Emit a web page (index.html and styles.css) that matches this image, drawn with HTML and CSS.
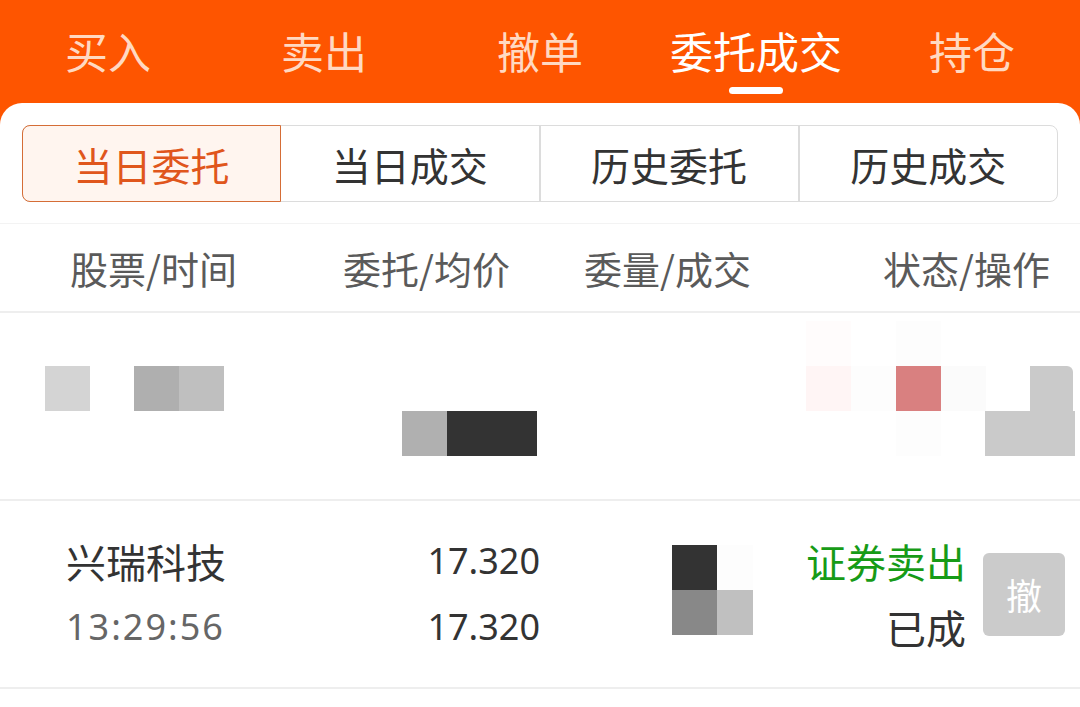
FILE: index.html
```html
<!DOCTYPE html>
<html lang="zh-CN">
<head>
  <meta charset="UTF-8" />
  <meta name="viewport" content="width=device-width, initial-scale=1.0"/>
  <title>委托成交</title>
  <link rel="stylesheet" href="styles.css">
</head>
<body>
  <!-- top trade tabs -->
  <div class="topbar">
    <div class="top-tab">买入</div>
    <div class="top-tab">卖出</div>
    <div class="top-tab">撤单</div>
    <div class="top-tab active">委托成交</div>
    <div class="top-tab">持仓</div>
  </div>

  <div class="panel">
    <div class="segments">
      <div class="seg active">当日委托</div>
      <div class="seg">当日成交</div>
      <div class="seg">历史委托</div>
      <div class="seg">历史成交</div>
    </div>

    <div class="list-head">
      <div class="col c1">股票/时间</div>
      <div class="col c2">委托/均价</div>
      <div class="col c3">委量/成交</div>
      <div class="col c4">状态/操作</div>
    </div>

    <!-- censored row (mosaic) -->
    <div class="row masked">
      <span class="px" style="left:45px;top:53px;background:#d4d4d4"></span>
      <span class="px" style="left:134px;top:53px;background:#afafaf"></span>
      <span class="px" style="left:179px;top:53px;background:#bfbfbf"></span>
      <span class="px" style="left:402px;top:98px;background:#b0b0b0"></span>
      <span class="px wide" style="left:447px;top:98px;background:#333"></span>
      <span class="px" style="left:806px;top:8px;background:#fffcfc"></span>
      <span class="px" style="left:896px;top:8px;background:#fdfdfd"></span>
      <span class="px" style="left:806px;top:53px;background:#fff5f5"></span>
      <span class="px" style="left:851px;top:53px;background:#fdfdfd"></span>
      <span class="px" style="left:896px;top:53px;background:#d98080"></span>
      <span class="px" style="left:941px;top:53px;background:#fbfbfb"></span>
      <span class="px" style="left:896px;top:98px;background:#fdfdfd"></span>
      <span class="px btn-bit" style="left:1030px;top:53px;background:#cacaca"></span>
      <span class="px wide" style="left:985px;top:98px;background:#cacaca"></span>
    </div>

    <div class="row">
      <div class="col c1">
        <div class="name">兴瑞科技</div>
        <div class="time">13:29:56</div>
      </div>
      <div class="col c2">
        <div class="num">17.320</div>
        <div class="num">17.320</div>
      </div>
      <div class="col c3">
        <div class="mosaic">
          <span style="background:#333"></span>
          <span style="background:#fdfdfd"></span>
          <span style="background:#888"></span>
          <span style="background:#c0c0c0"></span>
        </div>
      </div>
      <div class="col c4">
        <div class="status">
          <div class="sell">证券卖出</div>
          <div class="done">已成</div>
        </div>
        <div class="cancel">撤</div>
      </div>
    </div>
  </div>
</body>
</html>
```

FILE: styles.css
```css
* {
  box-sizing: border-box;
  margin: 0;
  padding: 0;
}

body {
  background: #fe5500;
  font-family: "Noto Sans CJK SC", "Noto Sans", sans-serif;
  width: 1080px;
  height: 707px;
  overflow: hidden;
}

.topbar {
  display: grid;
  grid-template-columns: repeat(5, 1fr);
  height: 103px;
}

.top-tab {
  position: relative;
  text-align: center;
  font-size: 43px;
  line-height: 100px;
  color: #ffd9c2;
}

.top-tab.active {
  color: #fff;
}

.top-tab.active::after {
  content: "";
  position: absolute;
  left: 50%;
  bottom: 9px;
  width: 54px;
  height: 7px;
  margin-left: -27px;
  border-radius: 4px;
  background: #fff;
}

.panel {
  background: #fff;
  border-radius: 22px 22px 0 0;
  height: 604px;
  padding-top: 22px;
}

.segments {
  display: flex;
  margin: 0 22px;
  height: 77px;
  border: 1px solid #dcdcdc;
  border-radius: 8px;
}

.seg {
  flex: 1;
  display: flex;
  justify-content: center;
  align-items: center;
  font-size: 39px;
  color: #333;
  border-left: 2px solid #dcdcdc;
}

.seg:first-child {
  border-left: none;
}

.seg.active {
  margin: -1px 0 -1px -1px;
  color: #e0561c;
  background: #fff5ef;
  border: 1px solid #d56d36;
  border-radius: 8px 0 0 8px;
}

.seg.active + .seg {
  border-left: none;
}

.list-head {
  display: grid;
  grid-template-columns: repeat(4, minmax(0, 1fr));
  margin-top: 21px;
  height: 90px;
  align-items: center;
  font-size: 38px;
  color: #5a5a5a;
  border-top: 1px solid #f3f3f3;
  border-bottom: 2px solid #eee;
}

.list-head .c1 { padding-left: 70px; }
.list-head .c2 { text-align: right; padding-right: 30px; }
.list-head .c3 { padding-left: 44px; }
.list-head .c4 { text-align: right; padding-right: 30px; }

.row {
  display: grid;
  grid-template-columns: repeat(4, minmax(0, 1fr));
  height: 188px;
  border-bottom: 2px solid #eee;
  align-items: center;
}

.row.masked {
  position: relative;
  display: block;
}

.px {
  position: absolute;
  width: 45px;
  height: 45px;
}

.px.wide {
  width: 90px;
}

.px.btn-bit {
  width: 43px;
  border-radius: 0 6px 0 0;
}

.row .c1 {
  padding-left: 66px;
}

.name {
  font-size: 40px;
  color: #333;
  line-height: 66px;
}

.time,
.num {
  font-family: "Noto Sans", sans-serif;
  font-size: 36px;
  line-height: 66px;
}

.time {
  color: #666;
  letter-spacing: 2px;
}

.row .c2 {
  text-align: right;
  color: #333;
}

.mosaic {
  display: grid;
  grid-template-columns: 45px 36px;
  grid-template-rows: 45px 45px;
  margin: -8px 0 0 132px;
}

.row .c4 {
  display: flex;
  align-items: center;
  justify-content: flex-end;
  padding-right: 15px;
}

.status {
  flex-shrink: 0;
  white-space: nowrap;
  text-align: right;
  font-size: 40px;
  line-height: 66px;
}

.sell {
  color: #179b17;
}

.done {
  color: #333;
}

.cancel {
  flex-shrink: 0;
  width: 82px;
  height: 83px;
  margin-left: 17px;
  display: flex;
  justify-content: center;
  align-items: center;
  border-radius: 6px;
  background: #cbcbcb;
  color: #fff;
  font-size: 36px;
}
```
